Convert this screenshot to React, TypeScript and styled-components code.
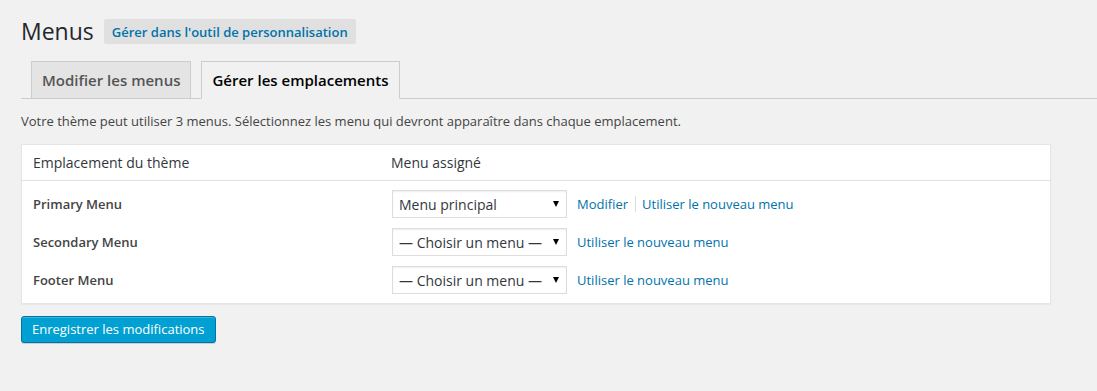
import React from "react";
import styled, { createGlobalStyle } from "styled-components";

const GlobalStyle = createGlobalStyle`
  html, body {
    margin: 0;
    padding: 0;
    background: #f1f1f1;
    font-family: "Open Sans", "Liberation Sans", sans-serif;
    color: #444;
    font-size: 13px;
  }
  * { box-sizing: border-box; }
`;

const Wrap = styled.div`
  padding: 17px 0 40px 21px;
`;

const Header = styled.div`
  display: flex;
  align-items: center;
  height: 29px;
`;

const Title = styled.h1`
  margin: 0;
  font-size: 23px;
  font-weight: 400;
  line-height: 29px;
  color: #23282d;
`;

const TitleAction = styled.a`
  margin-left: 10px;
  height: 25px;
  padding: 0 8px;
  display: inline-flex;
  align-items: center;
  border-radius: 2px;
  background: #e0e0e0;
  color: #0073aa;
  font-size: 13px;
  font-weight: 600;
  text-decoration: none;
  cursor: pointer;
`;

const TabBar = styled.div`
  display: flex;
  margin-top: 15px;
  border-bottom: 1px solid #ccc;
  height: 38px;
`;

const Tab = styled.a<{ active?: boolean }>`
  margin-left: 10px;
  height: 38px;
  padding: 6px 10px;
  border: 1px solid #ccc;
  border-bottom: 1px solid ${p => (p.active ? "#f1f1f1" : "#ccc")};
  background: ${p => (p.active ? "#f1f1f1" : "#e4e4e4")};
  color: ${p => (p.active ? "#000" : "#555")};
  font-size: 15px;
  font-weight: 600;
  line-height: 24px;
  text-decoration: none;
  white-space: nowrap;
  cursor: pointer;
`;

const Description = styled.p`
  margin: 13px 0 13px;
  line-height: 19px;
  font-size: 13px;
  color: #444;
`;

const LocationsTable = styled.div`
  width: 1030px;
  background: #fff;
  border: 1px solid #e5e5e5;
  box-shadow: 0 1px 1px rgba(0, 0, 0, 0.04);
`;

const HeadRow = styled.div`
  display: grid;
  grid-template-columns: 358px 1fr;
  align-items: center;
  height: 36px;
  border-bottom: 1px solid #e1e1e1;
  font-size: 14px;
  color: #32373c;
`;

const Cell = styled.div`
  padding-left: 11px;
  display: flex;
  align-items: center;
`;

const Body = styled.div`
  padding: 4px 0 4px;
`;

const Row = styled.div`
  display: grid;
  grid-template-columns: 358px 1fr;
  align-items: center;
  height: 38px;
`;

const LocationLabel = styled.label`
  font-weight: 600;
  font-size: 13px;
  color: #444;
`;

const SelectBox = styled.div`
  position: relative;
  margin-left: 1px;
  width: 175px;
  height: 28px;
`;

const Select = styled.select`
  appearance: none;
  -webkit-appearance: none;
  width: 100%;
  height: 100%;
  margin: 0;
  padding: 0 20px 0 6px;
  border: 1px solid #ddd;
  border-radius: 0;
  box-shadow: inset 0 1px 2px rgba(0, 0, 0, 0.07);
  background: #fff;
  color: #32373c;
  font-family: "Open Sans", "Liberation Sans", sans-serif;
  font-size: 14px;
  outline: none;
`;

const Arrow = styled.span`
  position: absolute;
  right: 8px;
  top: 11px;
  width: 0;
  height: 0;
  border-left: 3px solid transparent;
  border-right: 3px solid transparent;
  border-top: 6px solid #000;
  pointer-events: none;
`;

const Links = styled.div`
  display: flex;
  align-items: center;
  margin-left: 10px;
`;

const Link = styled.a<{ divided?: boolean }>`
  color: #0073aa;
  font-size: 13px;
  text-decoration: none;
  cursor: pointer;
  line-height: 16px;
  ${p =>
    p.divided &&
    `
    border-left: 1px solid #ddd;
    margin-left: 7px;
    padding-left: 6px;
  `}
`;

const SaveButton = styled.button`
  margin-top: 12px;
  height: 27px;
  padding: 0 10px 1px;
  border: 1px solid #0073aa;
  border-radius: 3px;
  background: #00a0d2;
  box-shadow: inset 0 1px 0 rgba(120, 200, 230, 0.5), 0 1px 0 rgba(0, 0, 0, 0.15);
  color: #fff;
  font-family: "Open Sans", "Liberation Sans", sans-serif;
  font-size: 13px;
  cursor: pointer;
`;

const locations = [
  { name: "Primary Menu", value: "Menu principal", edit: true },
  { name: "Secondary Menu", value: "— Choisir un menu —", edit: false },
  { name: "Footer Menu", value: "— Choisir un menu —", edit: false },
];

export default function App() {
  return (
    <Wrap>
      <GlobalStyle />
      <Header>
        <Title>Menus</Title>
        <TitleAction>Gérer dans l'outil de personnalisation</TitleAction>
      </Header>
      <TabBar>
        <Tab>Modifier les menus</Tab>
        <Tab active>Gérer les emplacements</Tab>
      </TabBar>
      <Description>
        Votre thème peut utiliser 3 menus. Sélectionnez les menu qui devront apparaître dans chaque emplacement.
      </Description>
      <LocationsTable>
        <HeadRow>
          <Cell>Emplacement du thème</Cell>
          <Cell>Menu assigné</Cell>
        </HeadRow>
        <Body>
          {locations.map(loc => (
            <Row key={loc.name}>
              <Cell>
                <LocationLabel>{loc.name}</LocationLabel>
              </Cell>
              <Cell>
                <SelectBox>
                  <Select defaultValue={loc.value}>
                    <option>— Choisir un menu —</option>
                    <option>Menu principal</option>
                  </Select>
                  <Arrow />
                </SelectBox>
                <Links>
                  {loc.edit && <Link>Modifier</Link>}
                  <Link divided={loc.edit}>Utiliser le nouveau menu</Link>
                </Links>
              </Cell>
            </Row>
          ))}
        </Body>
      </LocationsTable>
      <SaveButton>Enregistrer les modifications</SaveButton>
    </Wrap>
  );
}
